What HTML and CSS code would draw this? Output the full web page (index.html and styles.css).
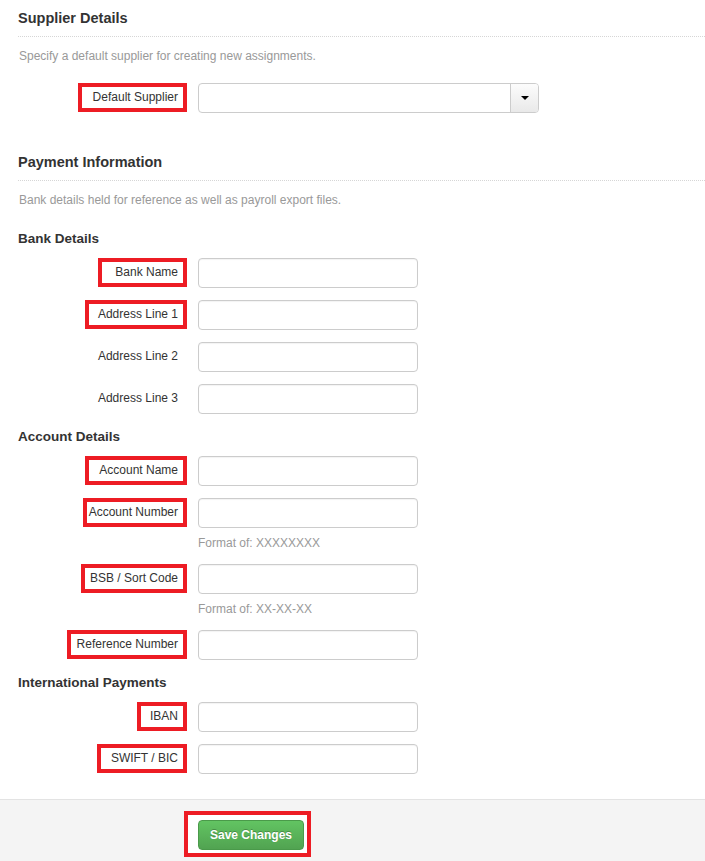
FILE: index.html
```html
<!DOCTYPE html>
<html>
<head>
<meta charset="utf-8">
<link rel="stylesheet" href="styles.css">
</head>
<body>
<div class="page">
  <section class="section">
    <h3 class="section-title">Supplier Details</h3>
    <p class="section-desc">Specify a default supplier for creating new assignments.</p>
    <div class="row">
      <div class="label-col"><span class="lbl boxed p11">Default Supplier</span></div>
      <div class="select">
        <span class="select-value"></span>
        <span class="select-btn"><span class="caret"></span></span>
      </div>
    </div>
  </section>

  <section class="section section-payment">
    <h3 class="section-title">Payment Information</h3>
    <p class="section-desc section-desc-lg">Bank details held for reference as well as payroll export files.</p>

    <h4 class="sub">Bank Details</h4>
    <div class="row">
      <div class="label-col"><span class="lbl boxed p13">Bank Name</span></div>
      <div class="control"><input class="input" type="text"></div>
    </div>
    <div class="row">
      <div class="label-col"><span class="lbl boxed p9">Address Line 1</span></div>
      <div class="control"><input class="input" type="text"></div>
    </div>
    <div class="row">
      <div class="label-col"><span class="lbl">Address Line 2</span></div>
      <div class="control"><input class="input" type="text"></div>
    </div>
    <div class="row">
      <div class="label-col"><span class="lbl">Address Line 3</span></div>
      <div class="control"><input class="input" type="text"></div>
    </div>

    <h4 class="sub">Account Details</h4>
    <div class="row">
      <div class="label-col"><span class="lbl boxed p10">Account Name</span></div>
      <div class="control"><input class="input" type="text"></div>
    </div>
    <div class="row">
      <div class="label-col"><span class="lbl boxed p2">Account Number</span></div>
      <div class="control">
        <input class="input" type="text">
        <p class="help">Format of: XXXXXXXX</p>
      </div>
    </div>
    <div class="row">
      <div class="label-col"><span class="lbl boxed p5">BSB / Sort Code</span></div>
      <div class="control">
        <input class="input" type="text">
        <p class="help">Format of: XX-XX-XX</p>
      </div>
    </div>
    <div class="row">
      <div class="label-col"><span class="lbl boxed p6">Reference Number</span></div>
      <div class="control"><input class="input" type="text"></div>
    </div>

    <h4 class="sub">International Payments</h4>
    <div class="row">
      <div class="label-col"><span class="lbl boxed p9">IBAN</span></div>
      <div class="control"><input class="input" type="text"></div>
    </div>
    <div class="row">
      <div class="label-col"><span class="lbl boxed p10">SWIFT / BIC</span></div>
      <div class="control"><input class="input" type="text"></div>
    </div>
  </section>
</div>

<div class="footer">
  <span class="btn-box"><button class="btn-success" type="button">Save Changes</button></span>
</div>
</body>
</html>
```

FILE: styles.css
```css
* { box-sizing: border-box; }

html, body {
  margin: 0;
  padding: 0;
  background: #fff;
}

body {
  font-family: "Liberation Sans", Arial, sans-serif;
  font-size: 12px;
  color: #333;
  min-height: 861px;
  display: flex;
  flex-direction: column;
}

.page {
  padding: 8px 0 13px 18px;
}

.section-title {
  margin: 0;
  font-size: 14.5px;
  font-weight: bold;
  line-height: 20px;
  color: #333;
  padding-bottom: 8px;
  border-bottom: 1px dotted #d6d6d6;
}

.section-desc {
  margin: 10px 0 18px 1px;
  line-height: 18px;
  color: #999;
  font-size: 12px;
}

.section-desc-lg {
  margin-bottom: 19px;
}

.section-payment {
  margin-top: 39px;
}

.sub {
  margin: 0 0 9px 0;
  padding-top: 1px;
  font-size: 13.5px;
  font-weight: bold;
  line-height: 20px;
  color: #333;
}

.row {
  display: flex;
  align-items: flex-start;
  gap: 11px;
  margin-bottom: 12px;
}

.label-col {
  width: 169px;
  flex: none;
  display: flex;
  justify-content: flex-end;
}

.lbl {
  display: inline-block;
  height: 29px;
  line-height: 21px;
  border: 4px solid transparent;
  padding-right: 5px;
  white-space: nowrap;
  color: #333;
}

.lbl.boxed { border-color: #ed1c24; }
.p2 { padding-left: 2px; }
.p5 { padding-left: 5px; }
.p6 { padding-left: 6px; }
.p9 { padding-left: 9px; }
.p10 { padding-left: 10px; }
.p11 { padding-left: 11px; }
.p13 { padding-left: 13px; }

.control {
  display: flex;
  flex-direction: column;
}

.input {
  width: 220px;
  height: 30px;
  border: 1px solid #ccc;
  border-radius: 4px;
  background: #fff;
  padding: 4px 6px;
  margin: 0;
  font: inherit;
  box-shadow: inset 0 1px 1px rgba(0,0,0,0.05);
}

.help {
  margin: 6px 0 0 0;
  line-height: 18px;
  color: #999;
  font-size: 12px;
}

.select {
  display: flex;
  width: 341px;
  height: 30px;
  border: 1px solid #ccc;
  border-radius: 4px;
  background: #fff;
  overflow: hidden;
}

.select-value { flex: 1; }

.select-btn {
  width: 28px;
  flex: none;
  border-left: 1px solid #ccc;
  background: linear-gradient(#fcfcfc, #e9e9e9);
  display: flex;
  align-items: center;
  justify-content: center;
}

.caret {
  width: 0;
  height: 0;
  border-left: 4px solid transparent;
  border-right: 4px solid transparent;
  border-top: 4px solid #000;
}

.footer {
  flex: 1;
  background: #f4f4f4;
  border-top: 1px solid #e3e3e3;
  padding: 11px 0 0 184px;
}

.btn-box {
  display: inline-block;
  border: 4px solid #ed1c24;
  padding: 5px 3px 3px 10px;
  background: #fff;
}

.btn-success {
  display: block;
  height: 30px;
  padding: 0 11px;
  margin: 0;
  font-family: "Liberation Sans", Arial, sans-serif;
  font-size: 12px;
  font-weight: bold;
  color: #fff;
  text-shadow: 0 -1px 0 rgba(0,0,0,0.25);
  background: linear-gradient(#62c462, #51a351);
  border: 1px solid #4a9a4a;
  border-radius: 4px;
  cursor: pointer;
}
```
